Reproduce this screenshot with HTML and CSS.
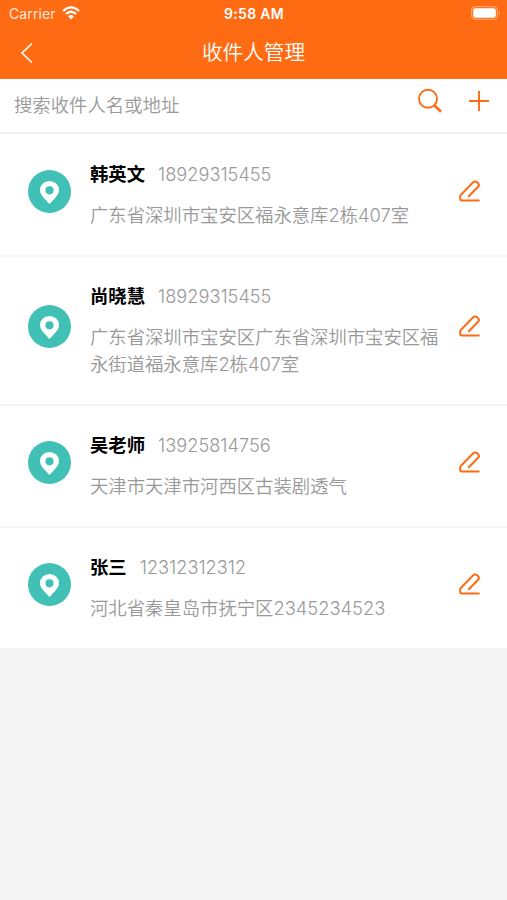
FILE: index.html
```html
<!DOCTYPE html>
<html lang="zh-CN">
<head>
    <meta charset="UTF-8">
    <meta name="viewport" content="width=device-width, initial-scale=1.0">
    <title>收件人管理</title>
    <link rel="stylesheet" href="styles.css">
</head>
<body>
    <svg class="defs" width="0" height="0">
        <symbol id="pin" viewBox="0 0 43 43">
            <circle cx="21.5" cy="21.5" r="21.5" fill="#41c1b5"/>
            <path fill="#fff" fill-rule="evenodd" d="M21.5 34C17 28.800 12 25 12 20.200a9.500 9.300 0 0 1 19 0C31 25 26 28.800 21.500 34zM21.500 16.200a4.100 4.100 0 1 0 0 8.200a4.100 4.100 0 0 0 0-8.200z"/>
        </symbol>
        <symbol id="edit" viewBox="0 0 24 24">
            <path d="M20.800 21.500H3.800Q2.200 21.500 2.200 19.800V17.600Q2.200 16.600 3 15.800L15.200 3.300Q16.800 1.900 18.700 2.900L20 4.100Q21.800 5.900 20.100 7.800L10.800 17.300" fill="none" stroke="#fd6b14" stroke-width="2" stroke-linecap="round" stroke-linejoin="round"/>
        </symbol>
    </svg>
    <header>
        <div class="status">
            <span class="carrier">Carrier</span>
            <svg class="wifi" width="18" height="14" viewBox="0 0 18 14">
                <path d="M1 5Q9-2.200 17 5M3.900 8Q9 3.600 14.100 8" fill="none" stroke="#fff" stroke-width="2.300"/>
                <path d="M6 10.300Q9 7.800 12 10.300L9 13.400z" fill="#fff"/>
            </svg>
            <span class="time">9:58 AM</span>
            <svg class="battery" width="30" height="14" viewBox="0 0 30 14">
                <rect x=".6" y=".6" width="25.800" height="12.800" rx="4" fill="none" stroke="#ffa368" stroke-width="1.200"/>
                <rect x="2.200" y="2.200" width="22.600" height="9.600" rx="2.200" fill="#fff"/>
                <path d="M27.800 5v4q1.400-.6 1.400-2t-1.400-2z" fill="#ffa368"/>
            </svg>
        </div>
        <div class="navbar">
            <svg class="back" width="14" height="22" viewBox="0 0 14 22">
                <path d="M12 1.500L2 11l10 9.500" fill="none" stroke="#fff" stroke-width="1.700"/>
            </svg>
            <h1>收件人管理</h1>
        </div>
    </header>
    <div class="search">
        <span class="placeholder">搜索收件人名或地址</span>
        <svg class="find" width="26" height="26" viewBox="0 0 26 26" fill="none" stroke="#fd6b14">
            <circle cx="11" cy="10.800" r="9" stroke-width="1.900"/>
            <path d="M17.300 17.200L24 23.800" stroke-width="2.700"/>
        </svg>
        <svg class="add" width="20" height="20" viewBox="0 0 20 20">
            <path d="M10 0v20M0 10h20" stroke="#fd6b14" stroke-width="1.900"/>
        </svg>
    </div>
    <div class="list">
        <div class="item">
            <svg class="pin"><use href="#pin"/></svg>
            <div class="info">
                <p class="who"><b>韩英文</b><span>18929315455</span></p>
                <p class="address">广东省深圳市宝安区福永意库2栋407室</p>
            </div>
            <svg class="edit"><use href="#edit"/></svg>
        </div>
        <div class="item">
            <svg class="pin"><use href="#pin"/></svg>
            <div class="info">
                <p class="who"><b>尚晓慧</b><span>18929315455</span></p>
                <p class="address">广东省深圳市宝安区广东省深圳市宝安区福永街道福永意库2栋407室</p>
            </div>
            <svg class="edit"><use href="#edit"/></svg>
        </div>
        <div class="item">
            <svg class="pin"><use href="#pin"/></svg>
            <div class="info">
                <p class="who"><b>吴老师</b><span>13925814756</span></p>
                <p class="address">天津市天津市河西区古装剧透气</p>
            </div>
            <svg class="edit"><use href="#edit"/></svg>
        </div>
        <div class="item">
            <svg class="pin"><use href="#pin"/></svg>
            <div class="info">
                <p class="who"><b>张三</b><span>12312312312</span></p>
                <p class="address">河北省秦皇岛市抚宁区2345234523</p>
            </div>
            <svg class="edit"><use href="#edit"/></svg>
        </div>
    </div>
</body>
</html>
```

FILE: styles.css
```css
* {
    box-sizing: border-box;
}
body {
    margin: 0;
    min-height: 900px;
    background: #f4f4f4;
    font-family: Inter, "Noto Sans CJK SC", sans-serif;
    font-size: 18.36px;
    font-weight: 350;
    color: #999;
}
.defs {
    position: absolute;
}
header {
    height: 79px;
    background: #ff6b13;
    color: #fff;
}
.status {
    display: grid;
    grid-template-columns: 53px 1fr auto 1fr 30px;
    align-items: center;
    height: 27px;
    padding: 0 6px 0 9px;
    font-size: 14px;
}
.carrier {
    font-weight: 400;
    color: #ffe9dc;
    letter-spacing: .1px;
}
.time {
    font-weight: 600;
    margin-left: -25px;
    letter-spacing: .3px;
}
.battery {
    grid-column: 5;
    margin-top: -1px;
}
.wifi {
    margin-top: -2px;
}
.navbar {
    display: grid;
    grid-template-columns: 14px 1fr 14px;
    align-items: center;
    height: 52px;
    padding: 0 20px;
}
h1 {
    margin: 0;
    font-size: 20.6px;
    font-weight: 350;
    line-height: 30px;
    text-align: center;
}
.search {
    display: flex;
    align-items: center;
    height: 55px;
    padding: 0 18px 9px 14px;
    background: #fff;
    border-bottom: 2px solid #efefef;
}
.placeholder {
    flex: 1;
    padding-top: 5px;
}
.find {
    margin-right: 26px;
}
.item {
    display: flex;
    align-items: center;
    padding: 27px 25px 26px 28px;
    background: #fff;
    border-bottom: 1px solid #f4f4f4;
}
.item + .item {
    padding-top: 26px;
    border-top: 1px solid #f4f4f4;
}
.item:last-child {
    border-bottom: none;
}
.pin {
    width: 43px;
    height: 43px;
    margin-top: -8px;
}
.info {
    width: 352px;
    margin-left: 19px;
}
.info p {
    margin: 0;
    line-height: 27px;
}
.who {
    display: flex;
}
.who b {
    color: #000;
    font-weight: 700;
}
.who span {
    margin-left: 13px;
    font-size: 18.2px;
}
.info .address {
    margin-top: 14px;
    letter-spacing: -.02px;
}
.edit {
    width: 24px;
    height: 24px;
    margin-top: -9px;
    margin-left: auto;
}
```
